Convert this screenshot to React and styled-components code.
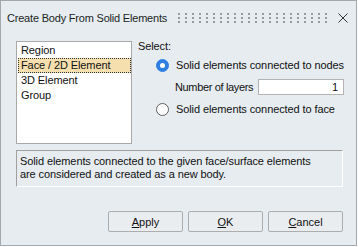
import React, { useState } from 'react';
import styled, { createGlobalStyle } from 'styled-components';

const GlobalStyle = createGlobalStyle`
  html, body { margin: 0; padding: 0; background: #fff; }
  body {
    font-family: "Liberation Sans", Arial, sans-serif;
    font-size: 11px;
    letter-spacing: -0.1px;
    color: #111;
    white-space: nowrap;
  }
`;

const Window = styled.div`
  box-sizing: border-box;
  width: 357px;
  height: 246px;
  border: 1px solid #a3a8ad;
  background: #e6ecf0;
  display: flex;
  flex-direction: column;
`;

const TitleBar = styled.div`
  height: 34px;
  display: flex;
  align-items: center;
  padding: 0 8px 0 6px;
  color: #1b1f24;
  font-size: 11px;
  letter-spacing: -0.2px;
`;

const Grip = styled.div`
  margin-left: auto;
  margin-right: 7px;
  width: 153px;
  height: 10px;
  background:
    linear-gradient(to bottom, transparent 2px, #e6ecf0 2px) 0 0 / 7px 4px,
    linear-gradient(to right, #9a9a9a 2px, transparent 2px) 0 0 / 7px 4px;
`;

const Main = styled.div`
  display: flex;
  align-items: flex-start;
  gap: 6px;
  padding: 4px 0 0 15px;
`;

const ListBox = styled.div`
  box-sizing: border-box;
  margin-top: 2px;
  width: 116px;
  height: 103px;
  border: 1px solid #a9a9a9;
  background: #fff;
  padding: 1px 0 0 1px;
`;

const ListItem = styled.div`
  box-sizing: border-box;
  height: 15px;
  line-height: 13px;
  padding-left: 2px;
  border: 1px dotted ${p => (p.$selected ? '#333' : 'transparent')};
  background: ${p => (p.$selected ? '#f5dfae' : 'transparent')};
  cursor: default;
`;

const Options = styled.div`
  display: flex;
  flex-direction: column;
`;

const SelectLabel = styled.div`
  line-height: 14px;
`;

const RadioRow = styled.label`
  display: flex;
  align-items: center;
  height: 14px;
  margin: ${p => p.$top}px 0 0 18px;
  cursor: default;
`;

const Radio = styled.span`
  box-sizing: border-box;
  width: 13px;
  height: 13px;
  border-radius: 50%;
  margin-right: 7px;
  display: flex;
  align-items: center;
  justify-content: center;
  background: ${p => (p.$checked ? '#2f7fe3' : '#fff')};
  border: 1px solid ${p => (p.$checked ? '#2f7fe3' : '#5f5f5f')};

  &::after {
    content: '';
    width: 5px;
    height: 5px;
    border-radius: 50%;
    background: ${p => (p.$checked ? '#fff' : 'transparent')};
  }
`;

const LayersRow = styled.div`
  display: flex;
  align-items: center;
  margin: 7px 0 0 37px;
`;

const LayersLabel = styled.span`
  width: 83px;
  letter-spacing: -0.35px;
`;

const NumberInput = styled.input`
  box-sizing: border-box;
  width: 86px;
  height: 16px;
  border: 1px solid #b3b3b3;
  background: #fff;
  font: inherit;
  color: #111;
  text-align: right;
  padding: 0 5px 0 0;
  outline: none;
`;

const Description = styled.div`
  box-sizing: border-box;
  margin: 6px 13px 0 15px;
  height: 37px;
  border-top: 1px solid #a0a0a0;
  border-left: 1px solid #a0a0a0;
  border-bottom: 1px solid #fff;
  border-right: 1px solid #fff;
  padding: 4px 3px;
  line-height: 13px;
`;

const ButtonRow = styled.div`
  display: flex;
  justify-content: flex-end;
  gap: 5px;
  margin-top: 24px;
  padding-right: 13px;
`;

const Button = styled.button`
  box-sizing: border-box;
  width: 75px;
  height: 21px;
  border: 1px solid #adadad;
  border-radius: 2px;
  background: #e9edf0;
  font: inherit;
  color: #111;
  padding: 0;
`;

const items = ['Region', 'Face / 2D Element', '3D Element', 'Group'];

export default function App() {
  const [selected, setSelected] = useState(1);
  const [mode, setMode] = useState('nodes');
  const [layers, setLayers] = useState('1');

  return (
    <>
      <GlobalStyle />
      <Window>
        <TitleBar>
          <span>Create Body From Solid Elements</span>
          <Grip />
          <svg width="10" height="10" viewBox="0 0 10 10">
            <path d="M0.5 0.5 L9.5 9.5 M9.5 0.5 L0.5 9.5" stroke="#333" strokeWidth="1" />
          </svg>
        </TitleBar>
        <Main>
          <ListBox>
            {items.map((it, i) => (
              <ListItem key={it} $selected={i === selected} onClick={() => setSelected(i)}>
                {it}
              </ListItem>
            ))}
          </ListBox>
          <Options>
            <SelectLabel>Select:</SelectLabel>
            <RadioRow $top={5} onClick={() => setMode('nodes')}>
              <Radio $checked={mode === 'nodes'} />
              Solid elements connected to nodes
            </RadioRow>
            <LayersRow>
              <LayersLabel>Number of layers</LayersLabel>
              <NumberInput value={layers} onChange={e => setLayers(e.target.value)} />
            </LayersRow>
            <RadioRow $top={7} onClick={() => setMode('face')}>
              <Radio $checked={mode === 'face'} />
              Solid elements connected to face
            </RadioRow>
          </Options>
        </Main>
        <Description>
          Solid elements connected to the given face/surface elements
          <br />
          are considered and created as a new body.
        </Description>
        <ButtonRow>
          <Button><u>A</u>pply</Button>
          <Button><u>O</u>K</Button>
          <Button><u>C</u>ancel</Button>
        </ButtonRow>
      </Window>
    </>
  );
}
